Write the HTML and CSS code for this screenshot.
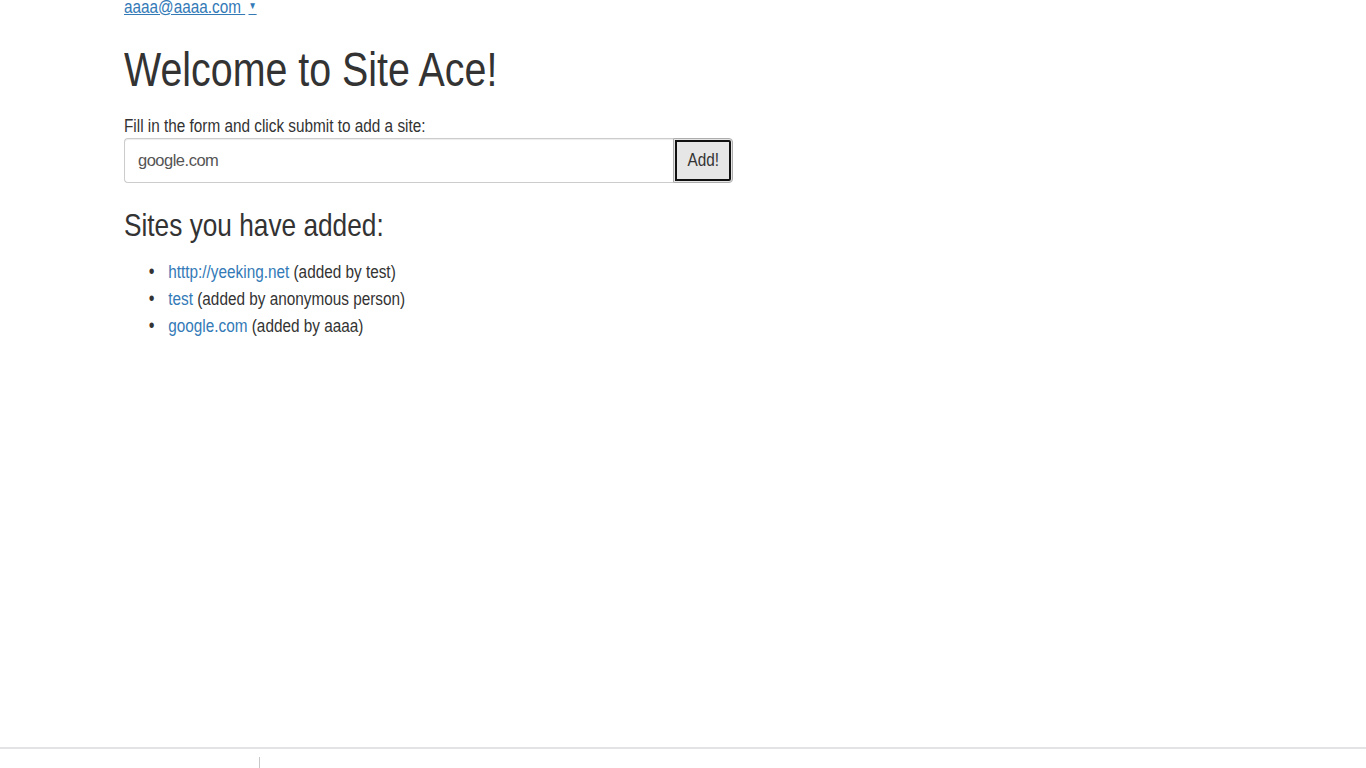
FILE: index.html
```html
<!DOCTYPE html>
<html>
<head>
<meta charset="utf-8">
<link rel="stylesheet" href="styles.css">
</head>
<body>
<div class="container">
  <div class="login"><a href="#" class="login-link">aaaa@aaaa.com <span class="caret">▼</span></a></div>
  <h1 class="title narrow">Welcome to Site Ace!</h1>
  <form class="site-form">
    <label class="form-label narrow">Fill in the form and click submit to add a site:</label>
    <div class="input-group">
      <input class="site-input" type="text" value="google.com">
      <button class="add-btn" type="button"><span class="btn-text">Add!</span></button>
    </div>
  </form>
  <h3 class="subtitle narrow">Sites you have added:</h3>
  <ul class="site-list narrow">
    <li><a href="#">htttp://yeeking.net</a> (added by test)</li>
    <li><a href="#">test</a> (added by anonymous person)</li>
    <li><a href="#">google.com</a> (added by aaaa)</li>
  </ul>
</div>
<div class="bottom-bar"><span class="bar-divider"></span></div>
</body>
</html>
```
FILE: styles.css
```css
html, body {
  margin: 0;
  padding: 0;
  background: #fff;
}
body {
  font-family: "Liberation Sans", Arial, sans-serif;
  color: #333;
  font-size: 18.7px;
  line-height: 26.67px;
}
.container {
  padding-left: 124px;
}
/* the reference face is a condensed Helvetica; squeeze the glyphs horizontally */
.narrow {
  transform: scaleX(0.82);
  transform-origin: left center;
}
.login {
  margin-top: -4px;
  height: 20px;
  line-height: 20px;
}
.login-link {
  display: inline-block;
  color: #337ab7;
  text-decoration: underline;
  transform: scaleX(0.82);
  transform-origin: left center;
}
.caret {
  font-size: 10px;
  vertical-align: 4px;
  margin-left: 4px;
}
.title {
  font-size: 48px;
  font-weight: 500;
  line-height: 1.1;
  margin: 28px 0 17px;
}
.form-label {
  display: block;
  line-height: 24px;
  margin: 0;
}
.input-group {
  display: flex;
  width: 609px;
}
.site-input {
  flex: 1;
  min-width: 0;
  height: 45px;
  box-sizing: border-box;
  border: 1px solid #ccc;
  border-radius: 4px 0 0 4px;
  border-right: none;
  padding: 0 13px;
  font-family: inherit;
  font-size: 16.5px;
  letter-spacing: -0.5px;
  color: #555;
  box-shadow: inset 0 1px 1px rgba(0,0,0,.075);
}
.add-btn {
  width: 60px;
  height: 45px;
  box-sizing: border-box;
  border: 1px solid #adadad;
  border-radius: 0 4px 4px 0;
  background: #e6e6e6;
  font-family: inherit;
  font-size: 18.7px;
  color: #333;
  padding: 0;
  outline: 2px solid #111;
  outline-offset: -4px;
}
.btn-text {
  display: inline-block;
  transform: scaleX(0.82);
}
.subtitle {
  font-size: 32px;
  font-weight: 500;
  line-height: 1.1;
  margin: 25px 0 15px;
}
.site-list {
  margin: 0;
  padding-left: 54px;
  line-height: 27px;
}
.site-list li::marker {
  content: "•\00a0\00a0\00a0";
  font-size: 20px;
}
.site-list a {
  color: #337ab7;
  text-decoration: none;
}
.bottom-bar {
  position: fixed;
  left: 0;
  right: 0;
  bottom: 0;
  height: 19px;
  border-top: 2px solid #e3e3e6;
  background: #fff;
}
.bar-divider {
  position: absolute;
  left: 259px;
  top: 8px;
  width: 1px;
  height: 11px;
  background: #c8c8c8;
}
```
